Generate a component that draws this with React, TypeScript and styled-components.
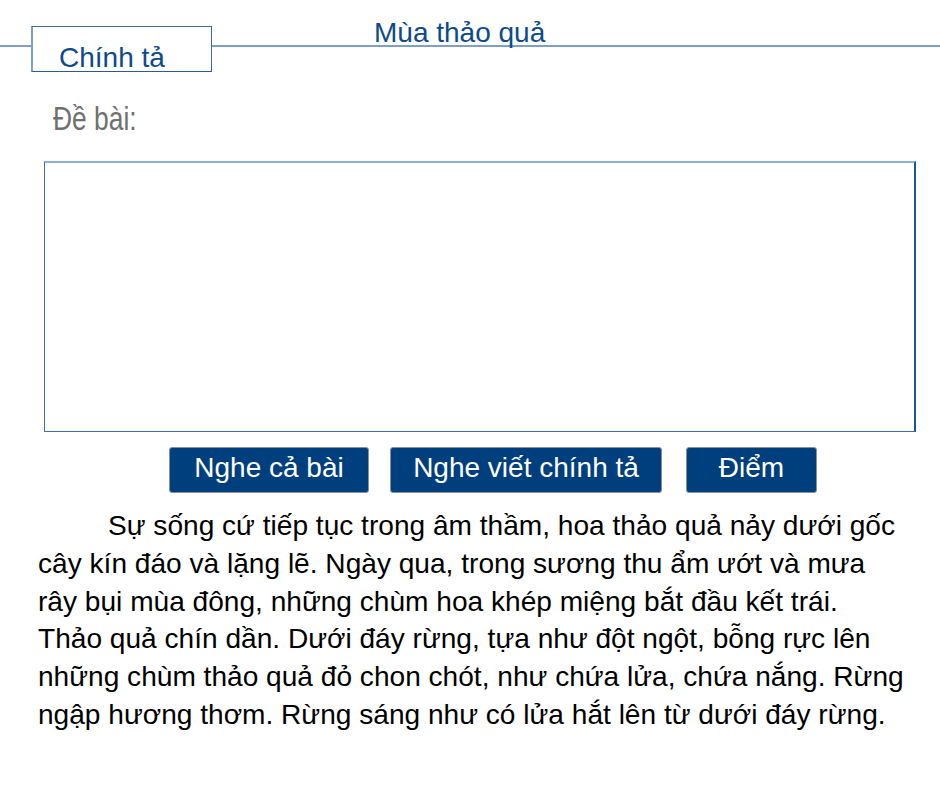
import styled, { createGlobalStyle } from 'styled-components';

const GlobalStyle = createGlobalStyle`
  html, body {
    margin: 0;
    padding: 0;
    background: #ffffff;
  }
  body {
    font-family: "Liberation Sans", Arial, sans-serif;
  }
`;

const Page = styled.div`
  width: 940px;
  min-height: 790px;
  background: #ffffff;
`;

const Header = styled.header`
  display: flex;
  align-items: flex-start;
  height: 72px;
  background: linear-gradient(
    to bottom,
    transparent 45px,
    #7f9fc6 45px,
    #7f9fc6 47px,
    transparent 47px
  );
`;

const Tab = styled.div`
  box-sizing: border-box;
  margin: 26px 0 0 31px;
  width: 181px;
  height: 46px;
  padding: 15px 0 0 26px;
  background: #ffffff;
  border-top: 1px solid #3a6aa6;
  border-left: 2px solid #7f9fc6;
  border-right: 1px solid #3a6aa6;
  border-bottom: 1px solid #2a5a98;
  color: #0d4a8c;
  font-size: 28px;
  line-height: 32px;
`;

const Title = styled.h1`
  margin: 17px 0 0 162px;
  font-size: 28px;
  line-height: 32px;
  font-weight: normal;
  color: #0d4a8c;
`;

const Prompt = styled.div`
  margin: 29px 0 0 53px;
  font-size: 33px;
  line-height: 36px;
  color: #707070;
  transform: scaleX(0.8);
  transform-origin: left center;
`;

const AnswerBox = styled.textarea`
  display: block;
  box-sizing: border-box;
  margin: 24px 0 0 44px;
  width: 872px;
  height: 271px;
  padding: 6px;
  resize: none;
  outline: none;
  background: #ffffff;
  border-top: 2px solid #8fb0d6;
  border-left: 1px solid #3f6fab;
  border-right: 2px solid #1f5595;
  border-bottom: 1px solid #3f6fab;
  font-family: "Liberation Sans", Arial, sans-serif;
  font-size: 20px;
`;

const ButtonRow = styled.div`
  display: flex;
  margin: 15px 0 0 169px;
`;

const ActionButton = styled.button<{ $width: number; $gap: number }>`
  box-sizing: border-box;
  width: ${(p) => p.$width}px;
  height: 46px;
  margin-right: ${(p) => p.$gap}px;
  padding: 0 0 4px;
  background: #003f7e;
  border: 1px solid #8a8f99;
  border-radius: 3px;
  color: #ffffff;
  font-family: "Liberation Sans", Arial, sans-serif;
  font-size: 28px;
  line-height: 32px;
  cursor: pointer;
`;

const Passage = styled.p`
  margin: 14px 0 0 38px;
  width: 870px;
  text-indent: 70px;
  font-size: 28.1px;
  line-height: 37.8px;
  color: #000000;
`;

const passage =
  'Sự sống cứ tiếp tục trong âm thầm, hoa thảo quả nảy dưới gốc cây kín đáo và lặng lẽ. Ngày qua, trong sương thu ẩm ướt và mưa rây bụi mùa đông, những chùm hoa khép miệng bắt đầu kết trái. Thảo quả chín dần. Dưới đáy rừng, tựa như đột ngột, bỗng rực lên những chùm thảo quả đỏ chon chót, như chứa lửa, chứa nắng. Rừng ngập hương thơm. Rừng sáng như có lửa hắt lên từ dưới đáy rừng.';

export default function App() {
  return (
    <Page>
      <GlobalStyle />
      <Header>
        <Tab>Chính tả</Tab>
        <Title>Mùa thảo quả</Title>
      </Header>
      <Prompt>Đề bài:</Prompt>
      <AnswerBox />
      <ButtonRow>
        <ActionButton $width={200} $gap={21}>Nghe cả bài</ActionButton>
        <ActionButton $width={272} $gap={24}>Nghe viết chính tả</ActionButton>
        <ActionButton $width={131} $gap={0}>Điểm</ActionButton>
      </ButtonRow>
      <Passage>{passage}</Passage>
    </Page>
  );
}
